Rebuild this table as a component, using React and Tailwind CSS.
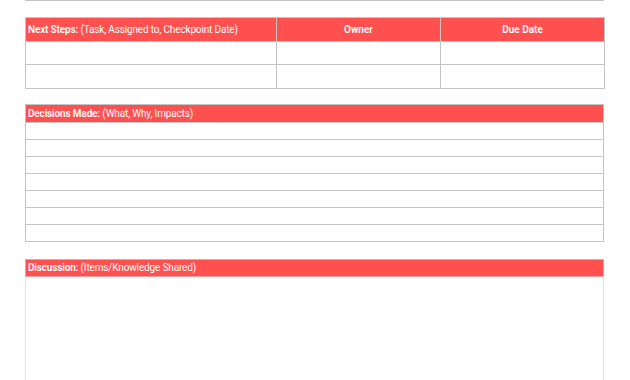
const font = { fontFamily: "Roboto, 'Liberation Sans', sans-serif" };

const HeaderLabel = ({ bold, rest }) => (
  <span className="text-[10px] leading-[12px] tracking-[-0.15px] text-white whitespace-nowrap">
    <span className="font-semibold">{bold}</span> {rest}
  </span>
);

const NextSteps = () => (
  <table className="w-[579px] border-collapse table-fixed text-[10px] leading-[12px]">
    <colgroup>
      <col className="w-[251px]" />
      <col className="w-[164px]" />
      <col className="w-[164px]" />
    </colgroup>
    <thead>
      <tr className="h-[24px] bg-[#ff5050]">
        <th className="border border-[#c4c4c4] px-[2px] p-0 text-left font-normal">
          <HeaderLabel bold="Next Steps:" rest="(Task, Assigned to, Checkpoint Date)" />
        </th>
        <th className="border border-[#c4c4c4] p-0 text-center">
          <span className="text-white font-semibold">Owner</span>
        </th>
        <th className="border border-[#c4c4c4] p-0 text-center">
          <span className="text-white font-semibold">Due Date</span>
        </th>
      </tr>
    </thead>
    <tbody>
      <tr className="h-[23px]">
        <td className="border border-[#c4c4c4]"></td>
        <td className="border border-[#c4c4c4]"></td>
        <td className="border border-[#c4c4c4]"></td>
      </tr>
      <tr className="h-[24px]">
        <td className="border border-[#c4c4c4]"></td>
        <td className="border border-[#c4c4c4]"></td>
        <td className="border border-[#c4c4c4]"></td>
      </tr>
    </tbody>
  </table>
);

const Decisions = () => (
  <div className="w-[579px] border border-[#c4c4c4]">
    <div className="h-[17px] bg-[#ff5050] flex items-center px-[2px]">
      <HeaderLabel bold="Decisions Made:" rest="(What, Why, Impacts)" />
    </div>
    {Array.from({ length: 7 }).map((_, i) => (
      <div key={i} className="h-[17px] border-t border-[#c4c4c4]" />
    ))}
  </div>
);

const Discussion = () => (
  <div className="w-[579px]">
    <div className="h-[18px] bg-[#ff5050] border border-[#f0a0a0] flex items-center px-[2px]">
      <HeaderLabel bold="Discussion:" rest="(Items/Knowledge Shared)" />
    </div>
    <div className="h-[140px] border-x border-[#e2e2e2]" />
  </div>
);

export default function App() {
  return (
    <div className="w-[630px] h-[380px] overflow-hidden bg-white" style={font}>
      <div className="pl-[25px]">
        <div className="w-[579px] h-px bg-[#c4c4c4]" />
        <div className="mt-[16px]">
          <NextSteps />
        </div>
        <div className="mt-[15px]">
          <Decisions />
        </div>
        <div className="mt-[17px]">
          <Discussion />
        </div>
      </div>
    </div>
  );
}
